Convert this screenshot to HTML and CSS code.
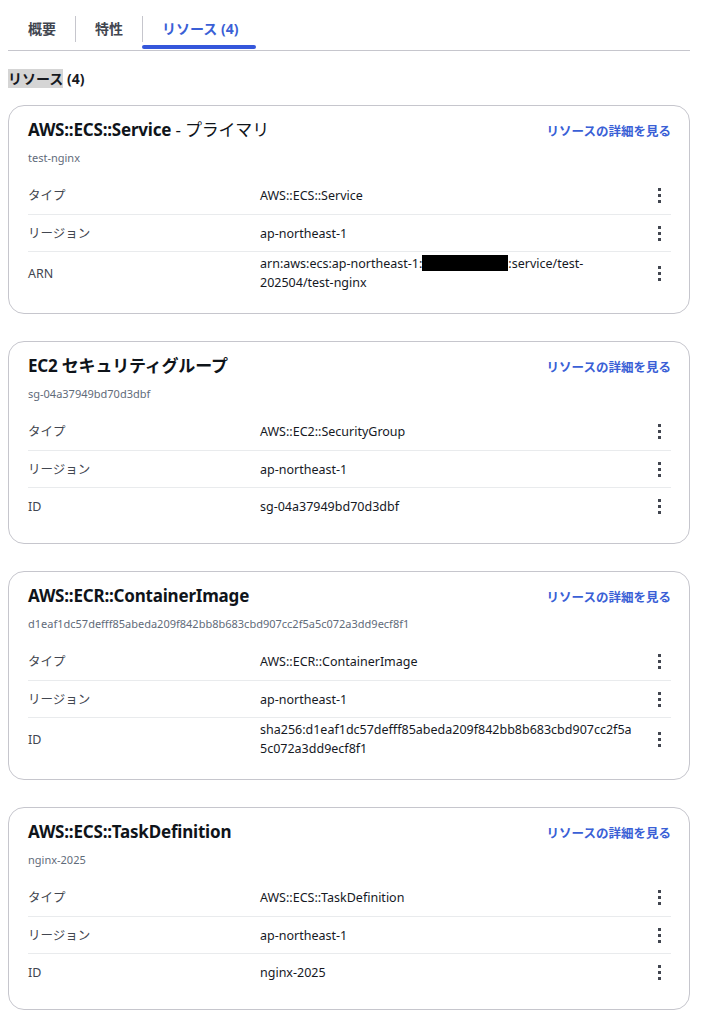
FILE: index.html
```html
<!DOCTYPE html>
<html lang="ja">
  <head>
    <meta charset="UTF-8" />
    <meta name="viewport" content="width=device-width, initial-scale=1.0" />
    <title>リソース</title>
    <link rel="stylesheet" href="styles.css">
  </head>
  <body>
    <div class="page">
      <div class="tabs">
        <div class="tab">概要</div>
        <div class="tab">特性</div>
        <div class="tab active">リソース (4)</div>
      </div>

      <h2 class="section-title"><span class="hl">リソース</span> (4)</h2>

      <div class="card">
        <div class="card-head">
          <h3 class="card-title">AWS::ECS::Service <span class="light">- プライマリ</span></h3>
          <a class="detail-link" href="#">リソースの詳細を見る</a>
        </div>
        <div class="card-sub">test-nginx</div>
        <div class="row">
          <div class="label">タイプ</div>
          <div class="value">AWS::ECS::Service</div>
          <div class="kebab"><i></i><i></i><i></i></div>
        </div>
        <div class="row">
          <div class="label">リージョン</div>
          <div class="value">ap-northeast-1</div>
          <div class="kebab"><i></i><i></i><i></i></div>
        </div>
        <div class="row">
          <div class="label">ARN</div>
          <div class="value">arn:aws:ecs:ap-northeast-1:<span class="redact"></span>:service/test-<br />202504/test-nginx</div>
          <div class="kebab"><i></i><i></i><i></i></div>
        </div>
      </div>

      <div class="card">
        <div class="card-head">
          <h3 class="card-title">EC2 セキュリティグループ</h3>
          <a class="detail-link" href="#">リソースの詳細を見る</a>
        </div>
        <div class="card-sub">sg-04a37949bd70d3dbf</div>
        <div class="row">
          <div class="label">タイプ</div>
          <div class="value">AWS::EC2::SecurityGroup</div>
          <div class="kebab"><i></i><i></i><i></i></div>
        </div>
        <div class="row">
          <div class="label">リージョン</div>
          <div class="value">ap-northeast-1</div>
          <div class="kebab"><i></i><i></i><i></i></div>
        </div>
        <div class="row">
          <div class="label">ID</div>
          <div class="value">sg-04a37949bd70d3dbf</div>
          <div class="kebab"><i></i><i></i><i></i></div>
        </div>
      </div>

      <div class="card">
        <div class="card-head">
          <h3 class="card-title">AWS::ECR::ContainerImage</h3>
          <a class="detail-link" href="#">リソースの詳細を見る</a>
        </div>
        <div class="card-sub">d1eaf1dc57defff85abeda209f842bb8b683cbd907cc2f5a5c072a3dd9ecf8f1</div>
        <div class="row">
          <div class="label">タイプ</div>
          <div class="value">AWS::ECR::ContainerImage</div>
          <div class="kebab"><i></i><i></i><i></i></div>
        </div>
        <div class="row">
          <div class="label">リージョン</div>
          <div class="value">ap-northeast-1</div>
          <div class="kebab"><i></i><i></i><i></i></div>
        </div>
        <div class="row">
          <div class="label">ID</div>
          <div class="value">sha256:d1eaf1dc57defff85abeda209f842bb8b683cbd907cc2f5a<br />5c072a3dd9ecf8f1</div>
          <div class="kebab"><i></i><i></i><i></i></div>
        </div>
      </div>

      <div class="card">
        <div class="card-head">
          <h3 class="card-title">AWS::ECS::TaskDefinition</h3>
          <a class="detail-link" href="#">リソースの詳細を見る</a>
        </div>
        <div class="card-sub">nginx-2025</div>
        <div class="row">
          <div class="label">タイプ</div>
          <div class="value">AWS::ECS::TaskDefinition</div>
          <div class="kebab"><i></i><i></i><i></i></div>
        </div>
        <div class="row">
          <div class="label">リージョン</div>
          <div class="value">ap-northeast-1</div>
          <div class="kebab"><i></i><i></i><i></i></div>
        </div>
        <div class="row">
          <div class="label">ID</div>
          <div class="value">nginx-2025</div>
          <div class="kebab"><i></i><i></i><i></i></div>
        </div>
      </div>
    </div>
  </body>
</html>
```

FILE: styles.css
```css
body {
  margin: 0;
  padding: 0 8px;
  background: #fff;
  font-family: "Noto Sans", "Noto Sans CJK JP", sans-serif;
  color: #16191f;
}
.page {
  width: 682px;
}
.tabs {
  display: flex;
  height: 51px;
  padding-top: 1px;
  box-sizing: border-box;
  border-bottom: 1px solid #c6c6cd;
}
.tab {
  position: relative;
  display: flex;
  align-items: center;
  height: 42px;
  margin-top: 6px;
  padding: 0 19px 0 20px;
  font-size: 14px;
  font-weight: bold;
  color: #424650;
}
.tab + .tab::before {
  content: "";
  position: absolute;
  left: 0;
  top: 9px;
  height: 26px;
  border-left: 1px solid #c6c6cd;
}
.tab.active {
  color: #3a5fd6;
  padding-right: 18px;
}
.tab.active::after {
  content: "";
  position: absolute;
  left: 0;
  right: 0;
  bottom: 0;
  height: 4px;
  border-radius: 2px;
  background: #3557db;
}
.section-title {
  margin: 18px 0 16px;
  font-size: 14px;
  line-height: 20px;
  font-weight: bold;
  color: #16191f;
}
.hl {
  background: #d5d5d5;
}
.card {
  border: 1px solid #c6c6cd;
  border-radius: 16px;
  padding: 12px 18px 19px 19px;
  margin-bottom: 27px;
}
.card-head {
  display: flex;
  justify-content: space-between;
  align-items: center;
  height: 24px;
}
.card-title {
  margin: 0;
  font-size: 17px;
  letter-spacing: -0.2px;
  line-height: 24px;
  font-weight: bold;
  color: #0f141a;
}
.card-title .light {
  font-weight: normal;
}
.detail-link {
  font-size: 12.5px;
  font-weight: bold;
  color: #3a5fd6;
  text-decoration: none;
}
.card-sub {
  margin-top: 8px;
  margin-bottom: 11px;
  font-size: 11px;
  line-height: 16px;
  color: #5f6b7a;
}
.row {
  display: flex;
  align-items: center;
  min-height: 37px;
  padding: 2px 0;
  box-sizing: border-box;
  font-size: 12.5px;
  line-height: 19px;
  color: #16191f;
}
.row + .row {
  border-top: 1px solid #e9ebed;
}
.label {
  width: 232px;
  color: #424650;
}
.value {
  flex: 1;
}
.redact {
  display: inline-block;
  width: 86px;
  height: 16px;
  background: #000;
  vertical-align: -3px;
}
.kebab {
  display: flex;
  flex-direction: column;
  gap: 3px;
  width: 3px;
  margin-right: 10px;
}
.kebab i {
  width: 3px;
  height: 3px;
  background: #424650;
}
```
